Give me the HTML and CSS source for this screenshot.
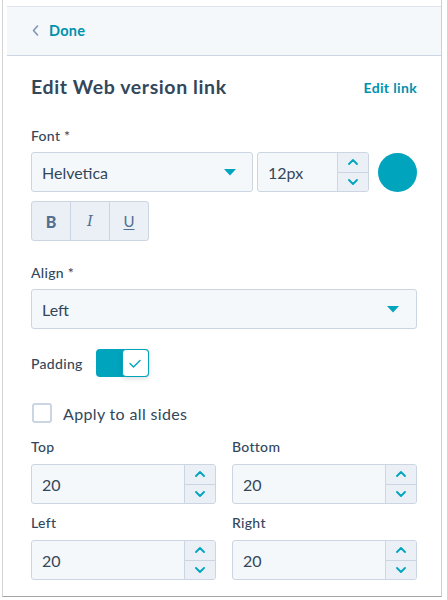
FILE: index.html
```html
<!DOCTYPE html>
<html>
<head>
<meta charset="utf-8">
<link rel="stylesheet" href="styles.css">
</head>
<body>
<div class="frame">
  <div class="panel">
    <div class="header">
      <svg class="back" width="7" height="11" viewBox="0 0 7 11"><path d="M5.5 1 L1.5 5.5 L5.5 10" fill="none" stroke="#7c98b6" stroke-width="1.6" stroke-linecap="round" stroke-linejoin="round"/></svg>
      <span class="done">Done</span>
    </div>
    <div class="content">
      <div class="title-row">
        <h1 class="title">Edit Web version link</h1>
        <span class="link">Edit link</span>
      </div>

      <div class="section section-font">
        <div class="label">Font *</div>
        <div class="font-row">
          <div class="select select-font">
            <span class="value">Helvetica</span>
            <svg class="caret" width="12" height="7" viewBox="0 0 12 7"><path d="M0 0 H12 L6 6.5 Z" fill="#00a4bd"/></svg>
          </div>
          <div class="number number-size">
            <span class="value">12px</span>
            <div class="steps">
              <div class="step"><svg width="10" height="6" viewBox="0 0 10 6"><path d="M1 5 L5 1 L9 5" fill="none" stroke="#00a4bd" stroke-width="1.8" stroke-linecap="round" stroke-linejoin="round"/></svg></div>
              <div class="step"><svg width="10" height="6" viewBox="0 0 10 6"><path d="M1 1 L5 5 L9 1" fill="none" stroke="#00a4bd" stroke-width="1.8" stroke-linecap="round" stroke-linejoin="round"/></svg></div>
            </div>
          </div>
          <div class="swatch"></div>
        </div>
        <div class="style-group">
          <div class="style-btn bold">B</div>
          <div class="style-btn italic">I</div>
          <div class="style-btn under">U</div>
        </div>
      </div>

      <div class="section section-align">
        <div class="label">Align *</div>
        <div class="select select-align">
          <span class="value">Left</span>
          <svg class="caret" width="12" height="7" viewBox="0 0 12 7"><path d="M0 0 H12 L6 6.5 Z" fill="#00a4bd"/></svg>
        </div>
      </div>

      <div class="padding-row">
        <span class="label-inline">Padding</span>
        <div class="toggle">
          <div class="knob"><svg width="12" height="9" viewBox="0 0 12 9"><path d="M1 4.5 L4.5 8 L11 1.5" fill="none" stroke="#00a4bd" stroke-width="1.4" stroke-linecap="round" stroke-linejoin="round"/></svg></div>
        </div>
      </div>

      <div class="check-row">
        <span class="checkbox"></span>
        <span class="check-label">Apply to all sides</span>
      </div>

      <div class="grid">
        <div class="cell">
          <div class="label">Top</div>
          <div class="number">
            <span class="value">20</span>
            <div class="steps">
              <div class="step"><svg width="10" height="6" viewBox="0 0 10 6"><path d="M1 5 L5 1 L9 5" fill="none" stroke="#00a4bd" stroke-width="1.8" stroke-linecap="round" stroke-linejoin="round"/></svg></div>
              <div class="step"><svg width="10" height="6" viewBox="0 0 10 6"><path d="M1 1 L5 5 L9 1" fill="none" stroke="#00a4bd" stroke-width="1.8" stroke-linecap="round" stroke-linejoin="round"/></svg></div>
            </div>
          </div>
        </div>
        <div class="cell">
          <div class="label">Bottom</div>
          <div class="number">
            <span class="value">20</span>
            <div class="steps">
              <div class="step"><svg width="10" height="6" viewBox="0 0 10 6"><path d="M1 5 L5 1 L9 5" fill="none" stroke="#00a4bd" stroke-width="1.8" stroke-linecap="round" stroke-linejoin="round"/></svg></div>
              <div class="step"><svg width="10" height="6" viewBox="0 0 10 6"><path d="M1 1 L5 5 L9 1" fill="none" stroke="#00a4bd" stroke-width="1.8" stroke-linecap="round" stroke-linejoin="round"/></svg></div>
            </div>
          </div>
        </div>
        <div class="cell">
          <div class="label">Left</div>
          <div class="number">
            <span class="value">20</span>
            <div class="steps">
              <div class="step"><svg width="10" height="6" viewBox="0 0 10 6"><path d="M1 5 L5 1 L9 5" fill="none" stroke="#00a4bd" stroke-width="1.8" stroke-linecap="round" stroke-linejoin="round"/></svg></div>
              <div class="step"><svg width="10" height="6" viewBox="0 0 10 6"><path d="M1 1 L5 5 L9 1" fill="none" stroke="#00a4bd" stroke-width="1.8" stroke-linecap="round" stroke-linejoin="round"/></svg></div>
            </div>
          </div>
        </div>
        <div class="cell">
          <div class="label">Right</div>
          <div class="number">
            <span class="value">20</span>
            <div class="steps">
              <div class="step"><svg width="10" height="6" viewBox="0 0 10 6"><path d="M1 5 L5 1 L9 5" fill="none" stroke="#00a4bd" stroke-width="1.8" stroke-linecap="round" stroke-linejoin="round"/></svg></div>
              <div class="step"><svg width="10" height="6" viewBox="0 0 10 6"><path d="M1 1 L5 5 L9 1" fill="none" stroke="#00a4bd" stroke-width="1.8" stroke-linecap="round" stroke-linejoin="round"/></svg></div>
            </div>
          </div>
        </div>
      </div>
    </div>
  </div>
</div>
</body>
</html>
```

FILE: styles.css
```css
* { box-sizing: border-box; }
html, body { margin: 0; padding: 0; background: #fff; }
body {
  font-family: Lato, "Open Sans", "Liberation Sans", sans-serif;
  color: #33475b;
}
.frame {
  margin-left: 2px;
  width: 440px;
  height: 597px;
  border-left: 1px solid #d4d4d4;
  border-right: 1px solid #cfcfcf;
  border-bottom: 1px solid #a3a3a3;
  padding: 6px 0 0 4px;
}
.panel { width: 434px; }
.header {
  height: 50px;
  background: #f5f8fa;
  border-top: 1px solid #dfe3eb;
  border-bottom: 1px solid #cbd6e2;
  display: flex;
  align-items: center;
  padding: 0 0 2px 25px;
}
.back { margin-right: 10px; margin-top: 1px; }
.done {
  font-size: 14.5px;
  font-weight: 700;
  color: #0091ae;
  letter-spacing: 0.3px;
}
.content { padding: 19px 24px 0 24px; }
.title-row {
  display: flex;
  justify-content: space-between;
  align-items: center;
  height: 24px;
}
.title {
  margin: 0;
  font-size: 19.5px;
  line-height: 24px;
  font-weight: 700;
  letter-spacing: 0.6px;
  color: #33475b;
}
.link {
  font-size: 14px;
  font-weight: 700;
  letter-spacing: 0.35px;
  color: #0091ae;
}
.label {
  font-size: 14px;
  line-height: 20px;
  font-weight: 500;
  letter-spacing: 0.3px;
  margin-bottom: 6px;
  color: #33475b;
}
.section-font { margin-top: 27px; }
.font-row { display: flex; align-items: center; }
.select {
  height: 40px;
  background: #f5f8fa;
  border: 1px solid #cbd6e2;
  border-radius: 3px;
  display: flex;
  align-items: center;
  justify-content: space-between;
  padding: 0 16px 0 10px;
}
.value { font-size: 16px; color: #33475b; }
.select-font { width: 222px; }
.number {
  height: 40px;
  background: #f5f8fa;
  border: 1px solid #cbd6e2;
  border-radius: 3px;
  display: flex;
  align-items: center;
  justify-content: space-between;
  padding-left: 10px;
  overflow: hidden;
}
.number-size { width: 112px; margin-left: 4px; }
.steps {
  width: 31px;
  height: 100%;
  border-left: 1px solid #cbd6e2;
  background: #eaf0f6;
  display: flex;
  flex-direction: column;
}
.step {
  flex: 1;
  display: flex;
  align-items: center;
  justify-content: center;
}
.step + .step { border-top: 1px solid #cbd6e2; }
.swatch {
  width: 39px;
  height: 39px;
  border-radius: 50%;
  background: #00a4bd;
  margin-left: 9px;
}
.style-group {
  margin-top: 9px;
  display: inline-flex;
  border: 1px solid #cbd6e2;
  border-radius: 3px;
  background: #eaf0f6;
  overflow: hidden;
}
.style-btn {
  width: 39px;
  height: 38px;
  display: flex;
  align-items: center;
  justify-content: center;
  font-size: 15px;
  color: #516f90;
}
.style-btn:first-child { width: 38px; }
.style-btn + .style-btn { border-left: 1px solid #cbd6e2; }
.bold { font-weight: 900; font-size: 16px; }
.italic { font-family: "DejaVu Serif", "Liberation Serif", serif; font-style: italic; font-size: 15px; }
.under { text-decoration: underline; text-underline-offset: 2px; font-size: 15px; }
.section-align { margin-top: 22px; }
.select-align { width: 386px; padding-right: 17px; }
.padding-row {
  margin-top: 20px;
  display: flex;
  align-items: center;
  height: 28px;
}
.label-inline { font-size: 14px; font-weight: 500; letter-spacing: 0.3px; margin-right: 13px; }
.toggle {
  width: 53px;
  height: 28px;
  background: #00a4bd;
  border-radius: 4px;
  display: flex;
  justify-content: flex-end;
}
.knob {
  width: 27px;
  height: 28px;
  background: #fff;
  border: 1px solid #00a4bd;
  border-radius: 4px;
  box-shadow: 0 2px 5px rgba(0,0,0,0.12);
  display: flex;
  align-items: center;
  justify-content: center;
}
.check-row {
  margin-top: 24px;
  height: 24px;
  display: flex;
  align-items: center;
}
.checkbox {
  width: 20px;
  height: 20px;
  border: 2px solid #cbd6e2;
  border-radius: 3px;
  background: #fff;
  margin-left: 1px;
  margin-right: 11px;
}
.check-label { font-size: 16px; letter-spacing: 0.35px; color: #33475b; }
.grid {
  margin-top: 12px;
  display: grid;
  grid-template-columns: 185px 185px;
  column-gap: 16px;
  row-gap: 9px;
}
.grid .label { margin-bottom: 7px; }
```
